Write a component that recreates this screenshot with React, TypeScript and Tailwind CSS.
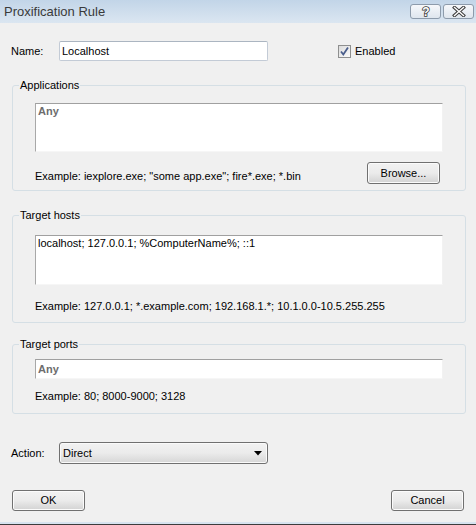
import React from "react";

function WinButton({ label, className = "" }: { label: string; className?: string }) {
  return (
    <div
      className={
        "flex items-center justify-center border border-[#707070] rounded-[3px] bg-gradient-to-b from-[#f2f2f2] via-[#ebebeb] to-[#d3d3d3] text-black shadow-[inset_0_0_0_1px_#fbfbfb] " +
        className
      }
    >
      {label}
    </div>
  );
}

function TextBox({ className = "", children }: { className?: string; children?: React.ReactNode }) {
  return (
    <div
      className={
        "bg-white border border-t-[#a0a0a0] border-l-[#a8a8a8] border-r-[#f2f2f2] border-b-[#f6f6f6] px-[2px] " +
        className
      }
    >
      {children}
    </div>
  );
}

function Group({ title, children, className = "" }: { title: string; children: React.ReactNode; className?: string }) {
  return (
    <fieldset className={"ml-[1px] w-[454px] border border-[#d5dfe5] rounded-[3px] px-[6px] " + className}>
      <legend className="px-[1px] leading-[15px] text-black">{title}</legend>
      <div className="px-[16px]">{children}</div>
    </fieldset>
  );
}

export default function App() {
  return (
    <div className="w-[476px] h-[525px] bg-[#f0f0f0] flex flex-col overflow-hidden font-['Liberation_Sans',Arial,sans-serif] text-[11px] leading-[15px] text-black">
      {/* Title bar */}
      <div className="h-[23px] flex items-start justify-between bg-gradient-to-b from-[#c2d5e8] to-[#dbe6f1] pl-[4px] pr-[2px]">
        <span className="text-[13px] leading-[23px] text-[#3a3a3a]">Proxification Rule</span>
        <div className="flex gap-[2px] mt-[4px]">
          <div className="w-[31px] h-[15px] flex items-center justify-center border border-[#8d9bab] rounded-[3px] bg-gradient-to-b from-[#f6f8fb] to-[#dfe6ee]">
            <svg width="12" height="13" viewBox="0 0 12 13">
              <text
                x="6"
                y="11"
                textAnchor="middle"
                fontSize="12"
                fontWeight="bold"
                fontFamily="Liberation Sans, Arial, sans-serif"
                fill="#ffffff"
                stroke="#3c3c3c"
                strokeWidth="1.6"
                paintOrder="stroke"
              >
                ?
              </text>
            </svg>
          </div>
          <div className="w-[31px] h-[15px] flex items-center justify-center border border-[#8d9bab] rounded-[3px] bg-gradient-to-b from-[#f6f8fb] to-[#dfe6ee]">
            <svg width="14" height="11" viewBox="0 0 14 11">
              <path d="M2.5 1.5 L11.5 9.5 M11.5 1.5 L2.5 9.5" stroke="#3c3c3c" strokeWidth="3.4" strokeLinecap="square" />
              <path d="M2.5 1.5 L11.5 9.5 M11.5 1.5 L2.5 9.5" stroke="#ffffff" strokeWidth="1.4" strokeLinecap="square" />
            </svg>
          </div>
        </div>
      </div>

      {/* Body */}
      <div className="flex-1 flex flex-col pl-[11px] pr-[10px]">
        {/* Name row */}
        <div className="mt-[18px] h-[20px] flex items-center">
          <span className="w-[48px]">Name:</span>
          <div className="w-[209px] h-[20px] flex items-center border border-[#c3cbd6] border-t-[#abb5c1] rounded-[2px] bg-white pl-[2px]">
            Localhost
          </div>
          <div className="ml-[70px] flex items-center">
            <div className="w-[13px] h-[13px] border border-[#8e8f8f] bg-gradient-to-br from-[#dcdcdc] to-[#fbfbfb] flex items-center justify-center">
              <svg width="11" height="11" viewBox="0 0 11 11">
                <path d="M2 5.5 L4.3 8.5 L9 1.5" fill="none" stroke="#4a5e8c" strokeWidth="1.8" />
              </svg>
            </div>
            <span className="ml-[4px]">Enabled</span>
          </div>
        </div>

        {/* Applications */}
        <Group title="Applications" className="mt-[17px] pb-[6px]">
          <TextBox className="mt-[10px] h-[49px]">
            <span className="font-bold text-[#6d6d6d]">Any</span>
          </TextBox>
          <div className="mt-[10px] flex items-end justify-between">
            <span>Example: iexplore.exe; "some app.exe"; fire*.exe; *.bin</span>
            <WinButton label="Browse..." className="w-[73px] h-[22px] mr-[3px]" />
          </div>
        </Group>

        {/* Target hosts */}
        <Group title="Target hosts" className="mt-[17px] pb-[8px]">
          <TextBox className="mt-[12px] h-[50px]">localhost; 127.0.0.1; %ComputerName%; ::1</TextBox>
          <div className="mt-[14px]">Example: 127.0.0.1; *.example.com; 192.168.1.*; 10.1.0.0-10.5.255.255</div>
        </Group>

        {/* Target ports */}
        <Group title="Target ports" className="mt-[14px] pb-[9px]">
          <TextBox className="mt-[7px] h-[20px] flex items-center">
            <span className="font-bold text-[#6d6d6d]">Any</span>
          </TextBox>
          <div className="mt-[10px]">Example: 80; 8000-9000; 3128</div>
        </Group>

        {/* Action */}
        <div className="mt-[28px] h-[22px] flex items-center">
          <span className="w-[48px]">Action:</span>
          <div className="w-[209px] h-[22px] flex items-center justify-between border border-[#707070] rounded-[3px] bg-gradient-to-b from-[#f2f2f2] via-[#ebebeb] to-[#d6d6d6] pl-[3px] pr-[5px] shadow-[inset_0_0_0_1px_#fafafa]">
            <span>Direct</span>
            <svg width="8" height="5" viewBox="0 0 8 5">
              <path d="M0 0 L8 0 L4 4.5 Z" fill="#000" />
            </svg>
          </div>
        </div>

        {/* Buttons */}
        <div className="mt-[26px] flex justify-between pl-[1px] pr-[2px]">
          <WinButton label="OK" className="w-[73px] h-[21px]" />
          <WinButton label="Cancel" className="w-[73px] h-[21px]" />
        </div>

        <div className="mt-auto" />
      </div>
      <div className="h-[2px] bg-[#d7e3ef]" />
      <div className="h-[1px] bg-[#3c3c3c]" />
    </div>
  );
}
